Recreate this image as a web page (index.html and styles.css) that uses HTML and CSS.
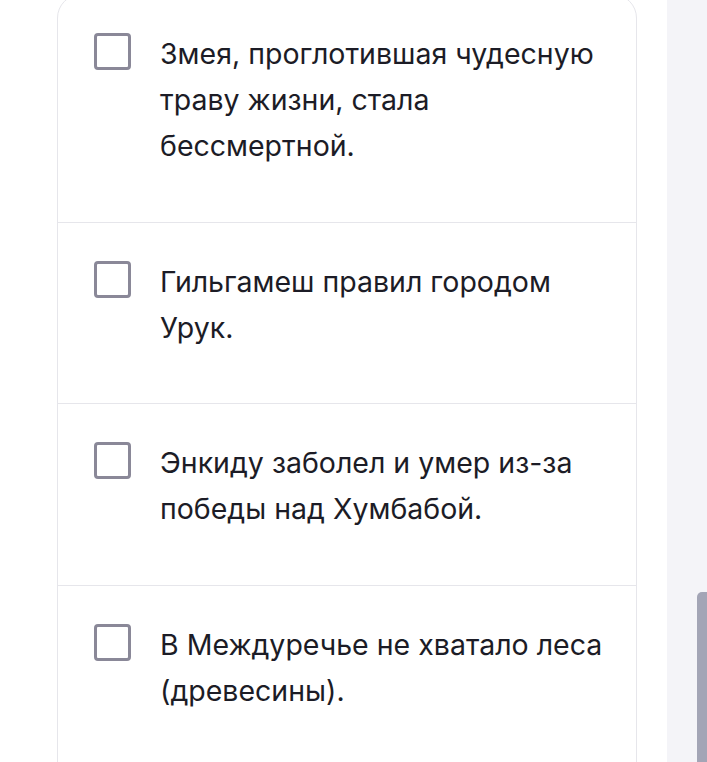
FILE: index.html
```html
<!DOCTYPE html>
<html lang="ru">
<head>
    <meta charset="UTF-8">
    <title>Тест</title>
    <link rel="stylesheet" href="styles.css">
</head>
<body>
<div class="page">
    <div class="main">
        <div class="card">
            <label class="row">
                <span class="box"></span>
                <span class="text">Змея, проглотившая чудесную траву жизни, стала бессмертной.</span>
            </label>
            <label class="row">
                <span class="box"></span>
                <span class="text">Гильгамеш правил городом Урук.</span>
            </label>
            <label class="row">
                <span class="box"></span>
                <span class="text">Энкиду заболел и умер из-за победы над Хумбабой.</span>
            </label>
            <label class="row">
                <span class="box"></span>
                <span class="text">В Междуречье не хватало леса (древесины).</span>
            </label>
        </div>
    </div>
    <div class="track">
        <div class="thumb"></div>
    </div>
</div>
</body>
</html>
```

FILE: styles.css
```css
* {
    padding: 0;
    margin: 0;
    box-sizing: border-box;
}

html, body {
    width: 100%;
    height: 100%;
    overflow: hidden;
    background: #FFFFFF;
}

.page {
    display: flex;
    height: 100%;
}

.main {
    flex: 1;
    padding: 0 30px 0 57px;
    overflow: hidden;
}

.card {
    margin-top: -6px;
    padding-bottom: 60px;
    border: 1px solid #E6E6EB;
    border-radius: 24px;
    background: #FFFFFF;
}

.row {
    display: flex;
    align-items: flex-start;
    padding: 36px 30px 52.5px 36px;
    border-bottom: 1px solid #E6E6EB;
}

.row:last-child {
    border-bottom: none;
}

.box {
    flex: none;
    width: 37px;
    height: 37px;
    margin-top: 2px;
    margin-right: 29px;
    border: 3px solid #8A8898;
    border-radius: 4px;
}

.text {
    font-family: Inter, "Noto Sans", sans-serif;
    font-size: 28.5px;
    line-height: 46px;
    color: #1C1C26;
}

.track {
    width: 40px;
    background: #F4F4F8;
    display: flex;
    flex-direction: column;
    justify-content: flex-end;
    align-items: flex-end;
}

.thumb {
    width: 10px;
    height: 170px;
    background: #A3A5B6;
    border-radius: 5px 0 0 0;
}
```
